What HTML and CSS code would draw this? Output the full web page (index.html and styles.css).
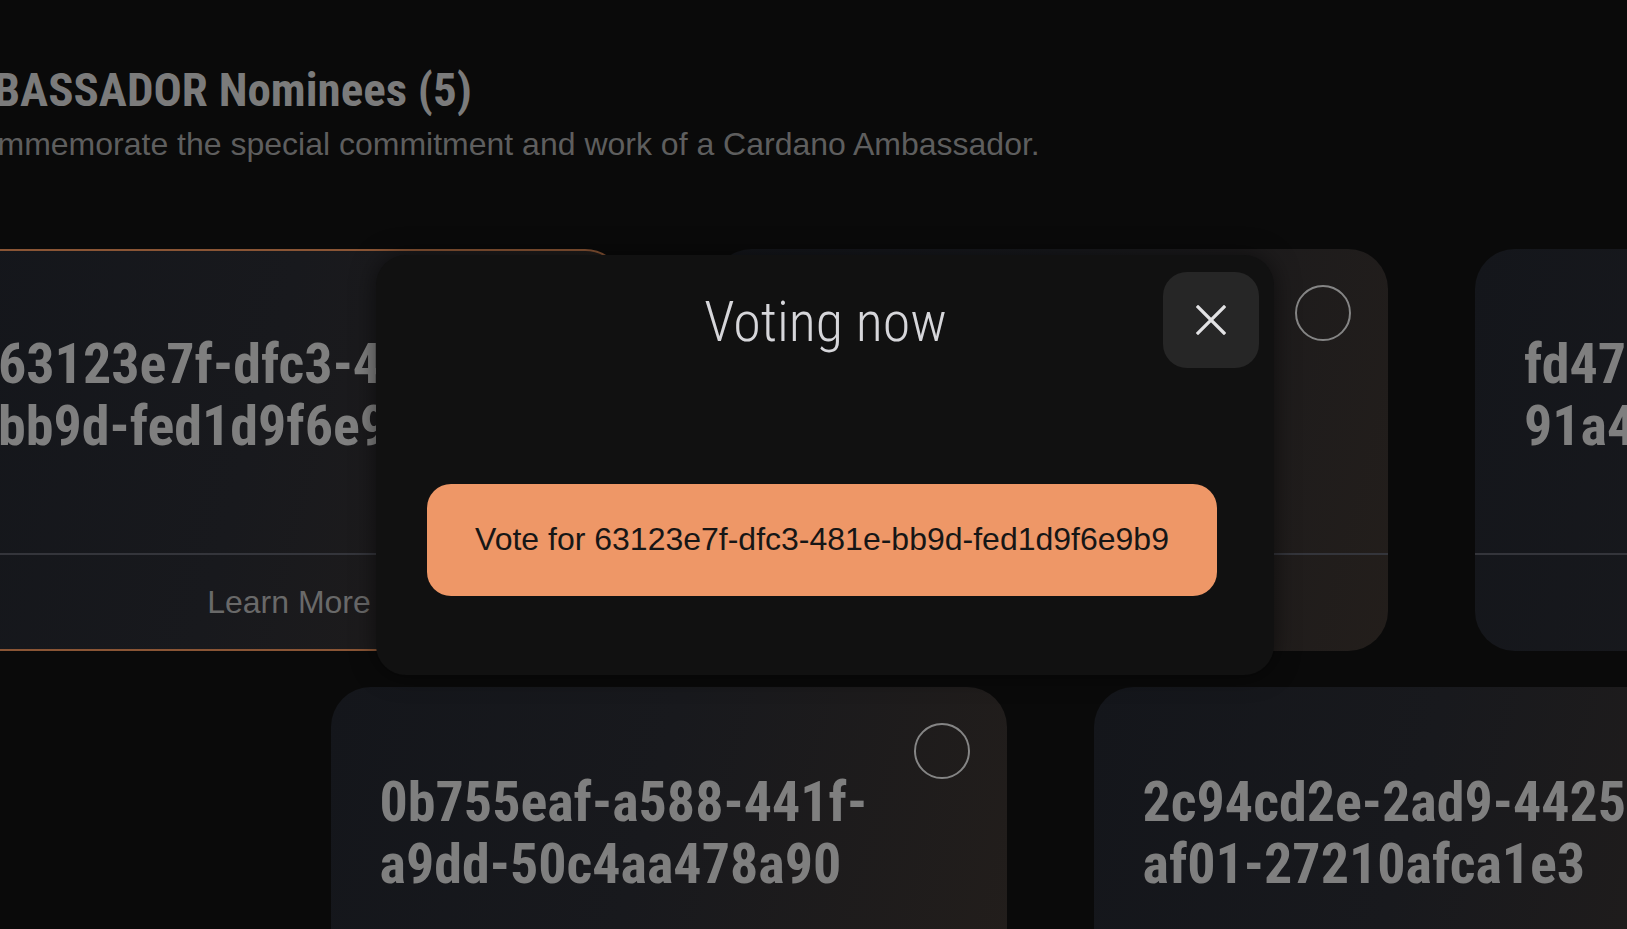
FILE: index.html
```html
<!DOCTYPE html>
<html lang="en">
<head>
<meta charset="utf-8">
<title>Ambassador Nominees</title>
<link rel="stylesheet" href="styles.css">
</head>
<body>
<main class="page">
  <header class="intro">
    <h1 class="heading">AMBASSADOR Nominees (5)</h1>
    <p class="lede">To commemorate the special commitment and work of a Cardano Ambassador.</p>
  </header>

  <section class="grid">
    <article class="card card--selected">
      <div class="card-top">
        <span class="pick"></span>
        <h2 class="nominee-id">63123e7f-dfc3-481e-bb9d-fed1d9f6e9b9</h2>
      </div>
      <div class="card-foot"><span class="learn">Learn More</span></div>
    </article>
    <article class="card">
      <div class="card-top">
        <span class="pick"></span>
        <h2 class="nominee-id">7be29d4a-5c81-4e3f-8a62-d9f04b7c1e55</h2>
      </div>
      <div class="card-foot"><span class="learn">Learn More</span></div>
    </article>
    <article class="card">
      <div class="card-top">
        <span class="pick"></span>
        <h2 class="nominee-id">fd47c1b2-8e3a-4f6d-91a4-3b7e2c5d8f10</h2>
      </div>
      <div class="card-foot"><span class="learn">Learn More</span></div>
    </article>
    <article class="card">
      <div class="card-top">
        <span class="pick"></span>
        <h2 class="nominee-id">0b755eaf-a588-441f-a9dd-50c4aa478a90</h2>
      </div>
      <div class="card-foot"><span class="learn">Learn More</span></div>
    </article>
    <article class="card">
      <div class="card-top">
        <span class="pick"></span>
        <h2 class="nominee-id">2c94cd2e-2ad9-4425-af01-27210afca1e3</h2>
      </div>
      <div class="card-foot"><span class="learn">Learn More</span></div>
    </article>
  </section>
</main>

<div class="backdrop">
  <div class="modal" role="dialog" aria-label="Voting now">
    <div class="modal-head">
      <span class="spacer"></span>
      <h2 class="modal-title">Voting now</h2>
      <button class="close" aria-label="Close">
        <svg width="30" height="30" viewBox="0 0 30 30" aria-hidden="true">
          <path d="M2 2 L28 28 M28 2 L2 28" stroke="#e2e2e4" stroke-width="3.2" stroke-linecap="square" fill="none"/>
        </svg>
      </button>
    </div>
    <button class="vote">Vote for 63123e7f-dfc3-481e-bb9d-fed1d9f6e9b9</button>
  </div>
</div>
</body>
</html>
```
FILE: styles.css
```css
* { box-sizing: border-box; }

html, body {
  margin: 0;
  padding: 0;
  width: 100%;
  height: 100%;
  overflow: hidden;
  background: #0a0a0a;
}

body {
  font-family: "Liberation Sans", Arial, sans-serif;
  color: #7c7c7c;
}

.page {
  width: 1627px;
  height: 929px;
  overflow: hidden;
}

.intro {
  margin-left: -70px;
  padding-top: 62px;
}

.heading {
  margin: 0;
  font-family: "Roboto Condensed", "DejaVu Sans Condensed", sans-serif;
  font-weight: 700;
  font-size: 47px;
  line-height: 56px;
  color: #7b7b7b;
  white-space: nowrap;
}

.lede {
  margin: 6px 0 0 -9px;
  font-size: 32px;
  line-height: 40px;
  color: #5e5e5e;
  white-space: nowrap;
}

.grid {
  width: 2202px;
  margin: 85px 0 0 -51px;
  display: flex;
  flex-wrap: wrap;
  justify-content: center;
  column-gap: 87px;
  row-gap: 36px;
}

.card {
  width: 676px;
  height: 402px;
  border-radius: 40px;
  display: flex;
  flex-direction: column;
  background: linear-gradient(105deg, #14161b 0%, #18191d 45%, #231e1b 100%);
  overflow: hidden;
}

.card--selected {
  border: 2px solid #8a5535;
}

.card-top {
  height: 306px;
  padding: 36px 37px 0 49px;
  display: flex;
  flex-direction: column;
  border-bottom: 2px solid #34353b;
}

.card--selected .card-top {
  height: 304px;
  padding: 34px 35px 0 47px;
}

.pick {
  align-self: flex-end;
  width: 56px;
  height: 56px;
  border-radius: 50%;
  border: 2px solid #858585;
  flex: none;
}

.nominee-id {
  margin: -8px 0 0 0;
  font-family: "Roboto Condensed", "DejaVu Sans Condensed", sans-serif;
  font-weight: 700;
  font-size: 56px;
  line-height: 62px;
  color: #7f7f7f;
}

.card-foot {
  flex: 1;
  display: flex;
  align-items: center;
  justify-content: center;
}

.learn {
  font-size: 32px;
  color: #696969;
  margin-left: 4px;
}

.backdrop {
  position: fixed;
  inset: 0;
  display: flex;
  align-items: center;
  justify-content: center;
  padding-left: 23px;
}

.modal {
  width: 898px;
  height: 420px;
  background: #111111;
  border-radius: 30px;
  padding: 17px 15px 16px 16px;
  box-shadow: 0 0 24px rgba(0, 0, 0, 0.55);
  display: flex;
  flex-direction: column;
}

.modal-head {
  display: grid;
  grid-template-columns: 96px 1fr 96px;
  align-items: center;
  height: 96px;
}

.modal-title {
  margin: 0;
  text-align: center;
  font-family: "Roboto Condensed", "DejaVu Sans Condensed", sans-serif;
  font-weight: 300;
  font-size: 56px;
  line-height: 64px;
  color: #d6d6da;
  transform: translateY(2px);
}

.close {
  width: 96px;
  height: 96px;
  border: 0;
  padding: 0;
  border-radius: 24px;
  background: #262626;
  display: flex;
  align-items: center;
  justify-content: center;
  cursor: pointer;
}

.vote {
  margin: 116px 0 0 35px;
  width: 790px;
  height: 112px;
  border: 0;
  border-radius: 24px;
  background: #ee9767;
  color: #161616;
  font-family: "Liberation Sans", Arial, sans-serif;
  font-size: 32px;
  cursor: pointer;
}
```
